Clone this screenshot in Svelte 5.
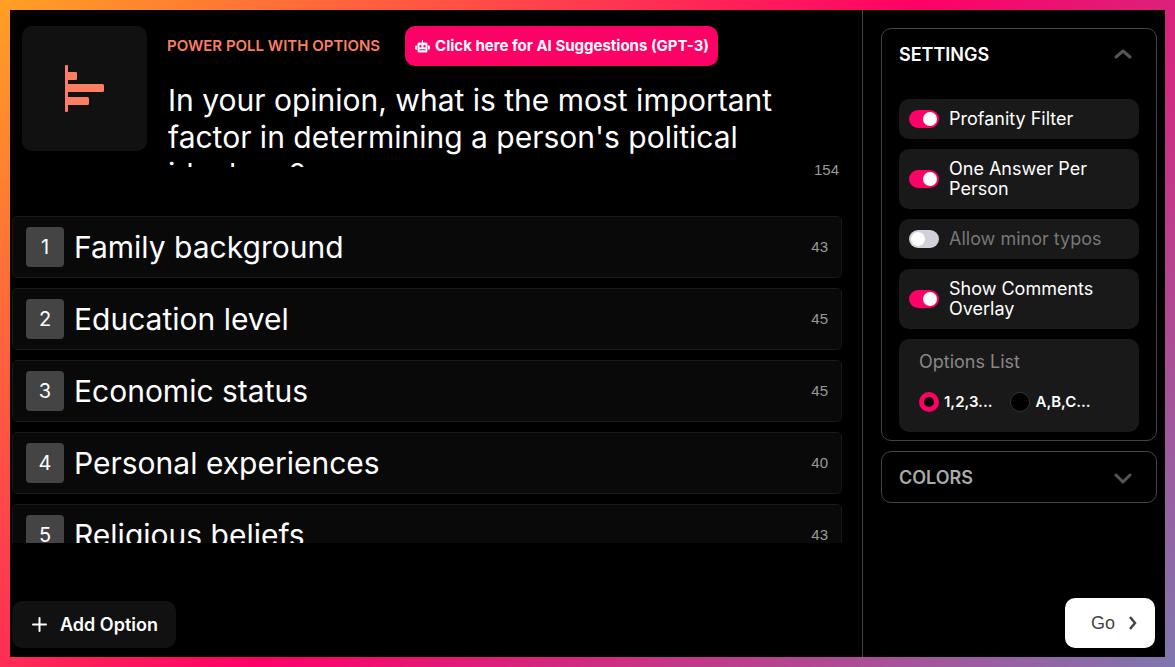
<script>
  let question = $state(
    "In your opinion, what is the most important factor in determining a person's political ideology?"
  );
  let options = $state([
    { text: 'Family background', left: 43 },
    { text: 'Education level', left: 45 },
    { text: 'Economic status', left: 45 },
    { text: 'Personal experiences', left: 40 },
    { text: 'Religious beliefs', left: 43 }
  ]);
  let settings = $state([
    { id: 'profanity', label: 'Profanity Filter', on: true },
    { id: 'single', label: 'One Answer Per Person', on: true },
    { id: 'typos', label: 'Allow minor typos', on: false },
    { id: 'comments', label: 'Show Comments Overlay', on: true }
  ]);
  let listStyle = $state('numbers');

  function addOption() {
    options.push({ text: '', left: 60 });
  }
</script>

<div class="frame">
  <main class="editor">
    <header class="head">
      <div class="tile">
        <svg width="40" height="48" viewBox="0 0 40 48" aria-hidden="true">
          <g fill="#fb7e62">
            <rect x="0" y="0" width="3" height="47" rx="1" />
            <path d="M2 7h9a1 1 0 0 1 1 1v6a1 1 0 0 1-1 1H2z" />
            <path d="M2 19h35.500a1.500 1.500 0 0 1 1.500 1.500v5a1.500 1.500 0 0 1-1.500 1.500H2z" />
            <path d="M2 32h20.500a1.500 1.500 0 0 1 1.500 1.500v5a1.500 1.500 0 0 1-1.500 1.500H2z" />
          </g>
        </svg>
      </div>
      <div class="prompt">
        <div class="kind">
          <h1>POWER POLL WITH OPTIONS</h1>
          <button class="ai" type="button">
            <svg width="15" height="13" viewBox="0 0 15 13" aria-hidden="true">
              <path
                fill="#fff"
                fill-rule="evenodd"
                d="M7 0h1v2.500h3a1.500 1.500 0 0 1 1.500 1.500v7a1.500 1.500 0 0 1-1.500 1.500H4A1.500 1.500 0 0 1 2.500 11V4A1.500 1.500 0 0 1 4 2.500h3zM5.500 5a1.200 1.200 0 1 0 0 2.400 1.200 1.200 0 0 0 0-2.400zm4 0a1.200 1.200 0 1 0 0 2.400 1.200 1.200 0 0 0 0-2.400zM4.500 9.300v1h6v-1zM0 6.500A1 1 0 0 1 1 5.500h1v4H1a1 1 0 0 1-1-1zm13-1h1a1 1 0 0 1 1 1v2a1 1 0 0 1-1 1h-1z"
              />
            </svg>
            Click here for AI Suggestions (GPT-3)
          </button>
        </div>
        <div class="ask">
          <textarea aria-label="Question" rows="2" bind:value={question}></textarea>
          <span class="left">154</span>
        </div>
      </div>
    </header>

    <ol class="options">
      {#each options as option, i}
        <li>
          <span class="num">{i + 1}</span>
          <input type="text" aria-label="Option {i + 1}" bind:value={option.text} />
          <span class="left">{option.left}</span>
        </li>
      {/each}
    </ol>

    <footer>
      <button class="add" type="button" onclick={addOption}>
        <svg width="15" height="15" viewBox="0 0 15 15" aria-hidden="true">
          <path d="M7.500 1v13M1 7.500h13" stroke="#fff" stroke-width="2" stroke-linecap="round" />
        </svg>
        Add Option
      </button>
    </footer>
  </main>

  <aside>
    <section class="card">
      <button class="toggle-head" type="button" aria-expanded="true">
        SETTINGS
        <svg width="18" height="10" viewBox="0 0 18 10" aria-hidden="true">
          <path d="M2 8l7-6 7 6" />
        </svg>
      </button>
      <div class="items">
        {#each settings as s}
          <label class="item" class:off={!s.on} for={s.id}>
            <input class="switch" id={s.id} type="checkbox" bind:checked={s.on} />
            <span>{s.label}</span>
          </label>
        {/each}
        <fieldset>
          <legend>Options List</legend>
          <div class="radios">
            <label><input type="radio" name="list" value="numbers" bind:group={listStyle} />1,2,3...</label>
            <label><input type="radio" name="list" value="letters" bind:group={listStyle} />A,B,C...</label>
          </div>
        </fieldset>
      </div>
    </section>

    <section class="card">
      <button class="toggle-head dim" type="button" aria-expanded="false">
        COLORS
        <svg width="18" height="14" viewBox="0 0 18 14" aria-hidden="true">
          <path d="M2 5l7 7 7-7" />
        </svg>
      </button>
    </section>

    <button class="go" type="button">
      Go
      <svg width="8" height="14" viewBox="0 0 8 14" aria-hidden="true">
        <path d="M1 1l5 6-5 6" fill="none" stroke="#444" stroke-width="2.500" />
      </svg>
    </button>
  </aside>
</div>

<style>
  :global(body) {
    margin: 0;
    background: #000;
  }
  .frame,
  .frame * {
    box-sizing: border-box;
  }
  .frame {
    display: grid;
    grid-template-columns: minmax(0, 1fr) 303px;
    height: 100vh;
    padding: 10px;
    background: linear-gradient(135deg, #ffa024, #ff0066 50%, #7f77af);
    color: #fff;
    font-family: Inter, sans-serif;
  }
  button,
  input,
  textarea {
    font-family: inherit;
    color: inherit;
    margin: 0;
    border: 0;
    background: none;
    padding: 0;
  }
  button {
    cursor: pointer;
  }
  .editor {
    display: flex;
    flex-direction: column;
    min-height: 0;
    background: #000;
    padding: 16px 20px 9px 2px;
  }
  .head {
    display: flex;
    gap: 20px;
    padding-left: 10px;
    height: 190px;
    flex: none;
  }
  .tile {
    display: flex;
    align-items: center;
    justify-content: center;
    flex: none;
    width: 125px;
    height: 125px;
    border-radius: 10px;
    background: #111;
  }
  .prompt {
    flex: 1;
    min-width: 0;
  }
  .kind {
    display: flex;
    align-items: center;
    gap: 25px;
  }
  h1 {
    margin: 0;
    font-size: 15px;
    font-weight: 600;
    line-height: 20px;
    color: #fb7e62;
  }
  .ai {
    display: flex;
    align-items: center;
    gap: 5px;
    height: 40px;
    padding: 0 9px 0 10px;
    border-radius: 10px;
    background: #ff0066;
    font-size: 15px;
    font-weight: 700;
    line-height: 20px;
    white-space: nowrap;
  }
  .ask {
    display: flex;
    align-items: flex-end;
    padding: 16px 3px 0 1px;
  }
  textarea {
    flex: 1;
    min-width: 0;
    height: 85px;
    resize: none;
    overflow: hidden;
    outline: none;
    font-size: 30px;
    line-height: 37px;
  }
  .left {
    font-family: 'Liberation Sans', Arial, sans-serif;
    font-size: 15px;
    line-height: 20px;
    color: #999;
  }
  .ask .left {
    margin-bottom: -13px;
  }
  .options {
    display: flex;
    flex-direction: column;
    gap: 10px;
    flex: 1;
    min-height: 0;
    overflow: hidden;
    margin: 0;
    padding: 0;
    list-style: none;
  }
  li {
    display: flex;
    align-items: center;
    flex: none;
    gap: 10px;
    height: 62px;
    padding: 0 13px;
    border: 1px solid #191919;
    border-radius: 5px;
    background: #090909;
  }
  .num {
    width: 38px;
    flex: none;
    border-radius: 4px;
    background: #444;
    font-size: 20px;
    line-height: 40px;
    text-align: center;
  }
  li input {
    flex: 1;
    min-width: 0;
    outline: none;
    font-size: 30px;
  }
  footer {
    flex: none;
    padding-top: 58px;
  }
  .add {
    display: flex;
    align-items: center;
    gap: 13px;
    height: 47px;
    padding: 0 18px 0 20px;
    border-radius: 10px;
    background: #111;
    font-size: 18px;
    font-weight: 600;
  }
  aside {
    display: flex;
    flex-direction: column;
    gap: 10px;
    padding: 18px 8px 9px 18px;
    border-left: 1px solid #444;
    background: #000;
  }
  .card {
    border: 1px solid #444;
    border-radius: 10px;
  }
  .toggle-head {
    display: flex;
    align-items: center;
    justify-content: space-between;
    width: 100%;
    height: 50px;
    padding: 0 24px 0 17px;
    font-size: 18px;
    font-weight: 600;
  }
  .toggle-head path {
    fill: none;
    stroke: #555;
    stroke-width: 3;
    stroke-linecap: round;
    stroke-linejoin: round;
  }
  .dim {
    color: #aaa;
  }
  .items {
    display: flex;
    flex-direction: column;
    gap: 10px;
    padding: 20px 17px 8px;
  }
  .item {
    display: flex;
    align-items: center;
    gap: 10px;
    padding: 10px;
    border-radius: 10px;
    background: #191919;
    font-size: 18px;
    line-height: 20px;
  }
  .off {
    color: #777;
  }
  .switch {
    appearance: none;
    display: flex;
    align-items: center;
    flex: none;
    width: 30px;
    height: 18px;
    padding: 0 2px;
    border-radius: 9px;
    background: #d1d1db;
  }
  .switch::before {
    content: '';
    width: 14px;
    height: 14px;
    border-radius: 50%;
    background: #fff;
  }
  .switch:checked {
    justify-content: flex-end;
    background: #ff0066;
  }
  fieldset {
    min-width: 0;
    margin: 0;
    padding: 13px 20px 20px;
    border: 0;
    border-radius: 10px;
    background: #191919;
  }
  legend {
    float: left;
    width: 100%;
    padding: 0;
    margin-bottom: 20px;
    color: #888;
    font-size: 18px;
    line-height: 20px;
  }
  .radios {
    clear: both;
    display: flex;
    gap: 18px;
  }
  .radios label {
    display: flex;
    align-items: center;
    gap: 5px;
    font-size: 15px;
    font-weight: 600;
    line-height: 20px;
  }
  .radios input {
    appearance: none;
    width: 20px;
    height: 20px;
    border: 1px solid #333;
    border-radius: 50%;
    background: #000;
  }
  .radios input:checked {
    border: 5px solid #ff0066;
  }
  .go {
    display: flex;
    align-items: center;
    justify-content: flex-end;
    gap: 14px;
    align-self: flex-end;
    width: 90px;
    height: 50px;
    margin: auto 2px 0 0;
    padding-right: 18px;
    border-radius: 10px;
    background: #fff;
    color: #444;
    font-family: 'Liberation Sans', Arial, sans-serif;
    font-size: 18px;
  }
</style>
